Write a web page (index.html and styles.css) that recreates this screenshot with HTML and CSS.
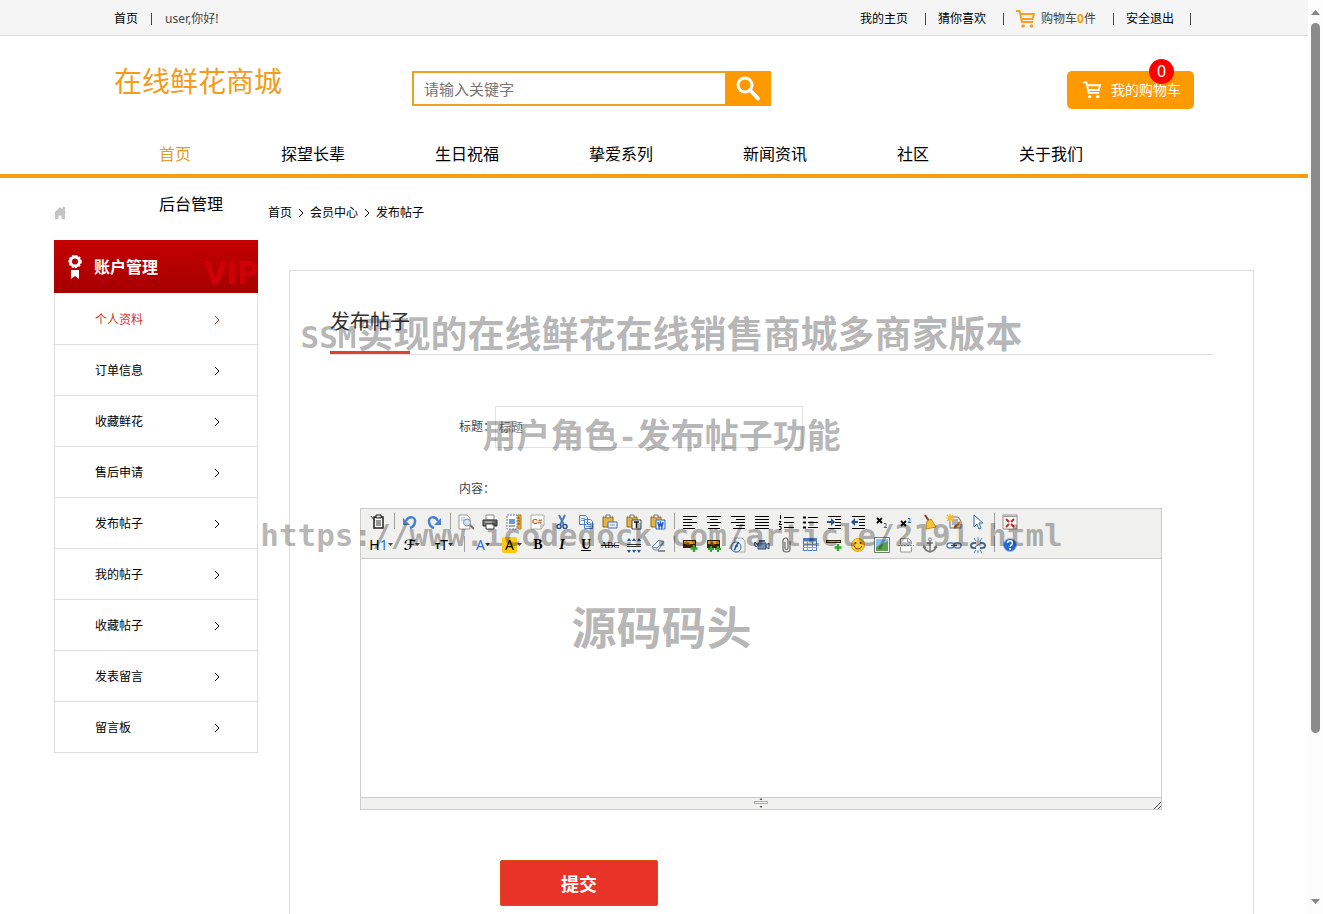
FILE: index.html
```html
<!DOCTYPE html>
<html lang="zh-CN">
<head>
<meta charset="utf-8">
<title>发布帖子</title>
<link rel="stylesheet" href="styles.css">
</head>
<body>
<svg class="defs" aria-hidden="true">
  <symbol id="cart" viewBox="0 0 20 20"><path d="M0 2h3.500l2.500 11h11M4.500 5H18l-1.500 5H6" fill="none" stroke="currentColor" stroke-width="2"/><circle cx="7" cy="17" r="1.800" fill="currentColor"/><circle cx="15.500" cy="17" r="1.800" fill="currentColor"/></symbol>
  <symbol id="arrow" viewBox="0 0 8 10"><path d="M2 1l4 4-4 4" fill="none" stroke="currentColor" stroke-width="1"/></symbol>
  <symbol id="drop" viewBox="0 0 5 3"><path d="M0 0h5L2.500 3z" fill="#444"/></symbol>
  <symbol id="clip" viewBox="0 0 16 16"><path d="M1 3h10v10H1z" fill="#e3b548" stroke="#8c6a1c"/><path d="M4 1h4v3H4z" fill="#eee" stroke="#777"/></symbol>
  <symbol id="picture" viewBox="0 0 16 16"><path d="M1 3h13v8H1z" fill="#3a2208"/><path d="M2 4h11v3H2z" fill="#f0a21c"/><path d="M3 8l3-3 3 3z" fill="#7a4a12"/></symbol>
</svg>

<div class="page">
  <div class="topbar">
    <div class="wrap topbar-row">
      <a href="#">首页</a><span class="bar"></span><span class="muted">user,你好!</span>
      <div class="topbar-links">
        <a href="#">我的主页</a><span class="bar"></span>
        <a href="#">猜你喜欢</a><span class="bar"></span>
        <a href="#" class="mini-cart muted"><svg class="cart-icon"><use href="#cart"/></svg><span>购物车<b>0</b>件</span></a><span class="bar"></span>
        <a href="#">安全退出</a><span class="bar last"></span>
      </div>
    </div>
  </div>

  <header class="wrap header">
    <div class="logo">在线鲜花商城</div>
    <form class="search">
      <input type="text" placeholder="请输入关键字" aria-label="请输入关键字">
      <button type="button" aria-label="搜索"><svg viewBox="0 0 26 26"><circle cx="10" cy="9" r="7" fill="none" stroke="#fff" stroke-width="3"/><path d="M15 14l8 8.500" stroke="#fff" stroke-width="4" stroke-linecap="round"/></svg></button>
    </form>
    <a href="#" class="cart-button"><svg class="cart-icon"><use href="#cart"/></svg>我的购物车<span class="badge">0</span></a>
  </header>

  <nav class="nav">
    <ul class="wrap">
      <li><a href="#" class="active">首页</a></li><li><a href="#">探望长辈</a></li><li><a href="#">生日祝福</a></li><li><a href="#">挚爱系列</a></li><li><a href="#">新闻资讯</a></li><li><a href="#">社区</a></li><li><a href="#">关于我们</a></li><li><a href="#">后台管理</a></li>
    </ul>
  </nav>

  <div class="content">
    <div class="crumbs">
      <svg class="home" viewBox="0 0 12 12"><path d="M6 0l2.500 2.300V0H11v4.500L12 6h-1v6H7.500V8.500h-3V12H1V6H0z" fill="#c4c4c4"/></svg>
      <a href="#">首页</a><svg class="chev"><use href="#arrow"/></svg><a href="#">会员中心</a><svg class="chev"><use href="#arrow"/></svg><a href="#">发布帖子</a>
    </div>

    <div class="columns">
      <aside class="sidebar">
        <h2><svg class="medal" viewBox="0 0 14 24"><path d="M3 15h8v9l-4-3-4 3z" fill="#fff"/><circle cx="7" cy="6.500" r="4.500" fill="none" stroke="#fff" stroke-width="3"/><circle cx="7" cy="6.500" r="6" fill="none" stroke="#fff" stroke-width="1.500" stroke-dasharray="2 1.500"/></svg>账户管理<span class="vip">VIP</span></h2>
        <ul>
          <li><a href="#" class="current">个人资料<svg class="chev"><use href="#arrow"/></svg></a></li>
          <li><a href="#">订单信息<svg class="chev"><use href="#arrow"/></svg></a></li>
          <li><a href="#">收藏鲜花<svg class="chev"><use href="#arrow"/></svg></a></li>
          <li><a href="#">售后申请<svg class="chev"><use href="#arrow"/></svg></a></li>
          <li><a href="#">发布帖子<svg class="chev"><use href="#arrow"/></svg></a></li>
          <li><a href="#">我的帖子<svg class="chev"><use href="#arrow"/></svg></a></li>
          <li><a href="#">收藏帖子<svg class="chev"><use href="#arrow"/></svg></a></li>
          <li><a href="#">发表留言<svg class="chev"><use href="#arrow"/></svg></a></li>
          <li><a href="#">留言板<svg class="chev"><use href="#arrow"/></svg></a></li>
        </ul>
      </aside>

      <main class="panel">
        <div class="panel-title"><h1>发布帖子</h1></div>
        <form class="post">
          <div class="field"><label for="title">标题：</label><input id="title" type="text" placeholder="标题"></div>
          <label class="body-label" for="body">内容：</label>
          <div class="editor">
            <div class="toolbar">
              <div class="tools">
                <button type="button" aria-label="HTML代码"><svg viewBox="0 0 16 16"><path d="M4 3h9v11H4z" fill="#fff" stroke="#222" stroke-width="1.500"/><path d="M6 1h5v3H6z" fill="#ddd" stroke="#222"/><path d="M1 2l4 5M6 7h5M6 9h5M6 11h5" stroke="#333"/></svg></button><i></i>
                <button type="button" aria-label="后退"><svg viewBox="0 0 16 16"><path d="M4 7c3-6 10-4 9 1-.5 3-2 5-5 6" fill="none" stroke="#4a80cf" stroke-width="2.500"/><path d="M1 4v7h7z" fill="#4a80cf"/></svg></button>
                <button type="button" aria-label="前进"><svg viewBox="0 0 16 16"><path d="M12 7C9 1 2 3 3 8c.5 3 2 5 5 6" fill="none" stroke="#4a80cf" stroke-width="2.500"/><path d="M15 4v7H8z" fill="#4a80cf"/></svg></button><i></i>
                <button type="button" aria-label="预览"><svg viewBox="0 0 16 16"><path d="M1 1h8l3 3v11H1z" fill="#fff" stroke="#999"/><path d="M3 4h4M3 6h3" stroke="#9bb5d5"/><circle cx="9" cy="8.500" r="3.500" fill="#cfe3f5" stroke="#7b8fa6"/><path d="M12 11l4 4" stroke="#8a6b55" stroke-width="2"/></svg></button>
                <button type="button" aria-label="打印"><svg viewBox="0 0 16 16"><path d="M4 1h8v5H4z" fill="#fff" stroke="#888"/><path d="M1 6h14v6H1z" fill="#777" stroke="#333"/><path d="M4 10h8v5H4z" fill="#fff" stroke="#444"/><path d="M3 8h10" stroke="#ccc"/></svg></button>
                <button type="button" aria-label="模板"><svg viewBox="0 0 16 16"><path d="M1 1h10v14H1z" fill="#fff" stroke="#5b82b5" stroke-dasharray="2 1"/><path d="M3 5h6v5H3z" fill="#6c9bd2"/><path d="M3 12h6" stroke="#555"/><path d="M12 1h3v14h-3z" fill="#f2b134" stroke="#b97a17"/><path d="M12 4h2M12 7h2M12 10h2" stroke="#75490a"/></svg></button>
                <button type="button" aria-label="插入程序代码"><svg viewBox="0 0 16 16"><path d="M1 1h13v10l-3 4H1z" fill="#fff" stroke="#aaa"/><path d="M11 15v-4h3" fill="none" stroke="#aaa"/><text x="2" y="10" class="tiny brown">C#</text></svg></button>
                <button type="button" aria-label="剪切"><svg viewBox="0 0 16 16"><path d="M5 1l5 10M11 1L6 11" stroke="#507bb0" stroke-width="2"/><circle cx="5" cy="12.500" r="2" fill="none" stroke="#234f92" stroke-width="1.500"/><circle cx="11" cy="12.500" r="2" fill="none" stroke="#234f92" stroke-width="1.500"/></svg></button>
                <button type="button" aria-label="复制"><svg viewBox="0 0 16 16"><path d="M1.500 1.500h6l2 2v7h-8zM6.500 5.500h6l2 2v7h-8z" fill="#e9f2fd" stroke="#4d7fc4"/><path d="M3 4.500h4M3 6.500h3M8 8.500h4M8 10.500h5M8 12.500h5" stroke="#6c9bd2"/></svg></button>
                <button type="button" aria-label="粘贴"><svg viewBox="0 0 16 16"><use href="#clip"/><path d="M6 8h9v6H6z" fill="#e9f2fd" stroke="#4d70a0"/><path d="M8 11h5" stroke="#6c9bd2"/></svg></button>
                <button type="button" aria-label="粘贴为无格式文本"><svg viewBox="0 0 16 16"><use href="#clip"/><path d="M6 6h9v9H6z" fill="#fff" stroke="#444"/><path d="M8 8h5M10.500 8v6" stroke="#111" stroke-width="1.500"/></svg></button>
                <button type="button" aria-label="从Word粘贴"><svg viewBox="0 0 16 16"><use href="#clip"/><path d="M6 6h9v9H6z" fill="#e2edfd" stroke="#3368b8"/><path d="M8 8l1.200 5L10.500 9l1.300 4L13 8" fill="none" stroke="#2459b5" stroke-width="1.500"/></svg></button><i></i>
                <button type="button" aria-label="左对齐"><svg viewBox="0 0 16 16"><path d="M1 2.500h14M1 5.500h9M1 8.500h14M1 11.500h9M1 14.500h12" stroke="#000"/></svg></button>
                <button type="button" aria-label="居中"><svg viewBox="0 0 16 16"><path d="M1 2.500h14M4 5.500h8M1 8.500h14M4 11.500h8M2 14.500h12" stroke="#000"/></svg></button>
                <button type="button" aria-label="右对齐"><svg viewBox="0 0 16 16"><path d="M1 2.500h14M6 5.500h9M1 8.500h14M6 11.500h9M3 14.500h12" stroke="#000"/></svg></button>
                <button type="button" aria-label="两端对齐"><svg viewBox="0 0 16 16"><path d="M1 2.500h14M1 5.500h14M1 8.500h14M1 11.500h14M1 14.500h14" stroke="#000"/></svg></button>
                <button type="button" aria-label="编号"><svg viewBox="0 0 16 16"><path d="M6 3.500h10M6 8.500h10M6 13.500h10M2.500 1v4M1 7.500h2l-2 3h3M1 12.500h2v3H1" fill="none" stroke="#000"/></svg></button>
                <button type="button" aria-label="项目符号"><svg viewBox="0 0 16 16"><path d="M6 3.500h10M6 8.500h10M6 13.500h10" stroke="#000"/><path d="M1 3.500h3M1 8.500h3M1 13.500h3" stroke="#000" stroke-width="2"/></svg></button>
                <button type="button" aria-label="增加缩进"><svg viewBox="0 0 16 16"><path d="M2 2.500h13M9 5.500h6M9 8.500h6M9 11.500h6M2 14.500h13" stroke="#000"/><path d="M1 7h4V4l4 4-4 4V9H1z" fill="#27518f"/></svg></button>
                <button type="button" aria-label="减少缩进"><svg viewBox="0 0 16 16"><path d="M2 2.500h13M9 5.500h6M9 8.500h6M9 11.500h6M2 14.500h13" stroke="#000"/><path d="M8 7H5V4L1 8l4 4V9h3z" fill="#27518f"/></svg></button>
                <button type="button" aria-label="下标"><svg viewBox="0 0 16 16"><path d="M3 4l5 5M8 4L3 9" stroke="#000" stroke-width="1.800"/><path d="M10 9.500h2v2l-2 2h3" fill="none" stroke="#2f62b0"/></svg></button>
                <button type="button" aria-label="上标"><svg viewBox="0 0 16 16"><path d="M3 7l5 5M8 7l-5 5" stroke="#000" stroke-width="1.800"/><path d="M10 4.500h2v2l-2 2h3" fill="none" stroke="#2f62b0"/></svg></button>
                <button type="button" aria-label="清理HTML代码"><svg viewBox="0 0 16 16"><path d="M3 1l4 6" stroke="#8b3d1f" stroke-width="2"/><path d="M5 7l4-2 5 8-10 2z" fill="#f5c33b" stroke="#c48a18"/></svg></button>
                <button type="button" aria-label="一键排版"><svg viewBox="0 0 16 16"><path d="M4 3h8l3 4v7H4z" fill="#f6e9d2" stroke="#777"/><path d="M6 6h6M6 8h6M6 10h5" stroke="#577cab"/><path d="M4 0v8M0 4h8M1 1l6 6M7 1L1 7" stroke="#f6b91f" stroke-width="1.200"/><path d="M8 14l6-6" stroke="#bd652a" stroke-width="2"/></svg></button>
                <button type="button" aria-label="全选"><svg viewBox="0 0 16 16"><path d="M4 1v12l3-3 2 5 2-1-2-5h4z" fill="#fff" stroke="#35689f"/></svg></button><i></i>
                <button type="button" aria-label="全屏显示"><svg viewBox="0 0 16 16"><path d="M1 1h14v14H1z" fill="#fafafa" stroke="#9a8c8c"/><path d="M1 2.500h14" stroke="#999"/><path d="M4 5l3 3M12 5L9 8M4 13l3-3M12 13l-3-3" stroke="#c22c22" stroke-width="2"/></svg></button>
              </div>
              <div class="tools">
                <button type="button" class="pick heading" aria-label="段落">H<em>1</em><svg class="drop"><use href="#drop"/></svg></button>
                <button type="button" class="pick face" aria-label="字体">ℱ<svg class="drop"><use href="#drop"/></svg></button>
                <button type="button" class="pick size" aria-label="文字大小"><small>т</small>T<svg class="drop"><use href="#drop"/></svg></button><i></i>
                <button type="button" class="pick color" aria-label="文字颜色">A<svg class="drop"><use href="#drop"/></svg></button>
                <button type="button" class="pick mark" aria-label="文字背景"><span>A</span><svg class="drop"><use href="#drop"/></svg></button>
                <button type="button" class="serif bold" aria-label="粗体">B</button>
                <button type="button" class="serif bold italic" aria-label="斜体">I</button>
                <button type="button" class="serif bold under" aria-label="下划线">U</button>
                <button type="button" class="serif strike" aria-label="删除线">ABC</button>
                <button type="button" aria-label="行距"><svg viewBox="0 0 16 16"><path d="M1 7.500h14M1 9.500h14" stroke="#333"/><path d="M3 1l-2 3h4zM8 1L6 4h4zM13 1l-2 3h4zM3 16l-2-3h4zM8 16l-2-3h4zM13 16l-2-3h4z" fill="#27518f"/></svg></button>
                <button type="button" aria-label="删除格式"><svg viewBox="0 0 16 16"><path d="M2 10l7-7 5 2-6 8H4z" fill="#edf2fa" stroke="#7086a8"/><path d="M2 10l5 1 7-6" fill="none" stroke="#7086a8"/><path d="M8 14h7" stroke="#333"/></svg></button><i></i>
                <button type="button" aria-label="图片"><svg viewBox="0 0 16 16"><use href="#picture"/><path d="M12 8v7M8.500 11.500h7" stroke="#36a52c" stroke-width="2.500"/></svg></button>
                <button type="button" aria-label="批量图片上传"><svg viewBox="0 0 16 16"><use href="#picture"/><path d="M5 9v6M2 12h6M12 9v6M9 12h6" stroke="#36a52c" stroke-width="2"/></svg></button>
                <button type="button" aria-label="Flash"><svg viewBox="0 0 16 16"><path d="M5 1h7l3 3v11H5z" fill="#eee" stroke="#aaa"/><circle cx="6" cy="10" r="5" fill="#e2edf7" stroke="#486a91"/><path d="M9 6c-3 0-3 6-5 7M5 9h3" fill="none" stroke="#24548d" stroke-width="1.500"/></svg></button>
                <button type="button" aria-label="视音频"><svg viewBox="0 0 16 16"><path d="M4 6h8v6H4z" fill="#7590b2" stroke="#334b6c"/><path d="M12 8l3-2v6l-3-2zM1 5l3 3-2 2-2-3z" fill="#afc4dc" stroke="#334b6c"/><path d="M5 4h6" stroke="#49617f" stroke-width="2"/></svg></button>
                <button type="button" aria-label="插入文件"><svg viewBox="0 0 16 16"><path d="M12 4v8c0 4-7 4-7 0V4c0-4 5-4 5 0v7c0 2-3 2-3 0V5" fill="none" stroke="#666" stroke-width="1.200"/></svg></button>
                <button type="button" aria-label="表格"><svg viewBox="0 0 16 16"><path d="M1.500 1.500h13v12h-13z" fill="#fff" stroke="#4a78bb"/><path d="M1 3h14" stroke="#4a78bb" stroke-width="3"/><path d="M1 7.500h14M1 10.500h14M5.500 4v10M10.500 4v10" stroke="#8ba9d4"/></svg></button>
                <button type="button" aria-label="插入横线"><svg viewBox="0 0 16 16"><path d="M0 3h15v3H0z" fill="#2a1c09"/><path d="M1 4.500h13" stroke="#f0a21c"/><path d="M12 7v7M8.500 10.500h7" stroke="#36a52c" stroke-width="2.500"/></svg></button>
                <button type="button" aria-label="插入表情"><svg viewBox="0 0 16 16"><circle cx="8" cy="8" r="6.500" fill="#ffce32" stroke="#e8a21b"/><path d="M4 9c2 4 6 4 8 0" fill="none" stroke="#66380a"/><circle cx="5.500" cy="6" r="1" fill="#66380a"/><circle cx="10.500" cy="6" r="1" fill="#66380a"/></svg></button>
                <button type="button" aria-label="地图"><svg viewBox="0 0 16 16"><path d="M.5.500h15v15H.5z" fill="#fff" stroke="#777"/><path d="M2 2h12v12H2z" fill="#86c1ed"/><path d="M2 10l6-3 6-3v10H2z" fill="#5ba34a"/></svg></button>
                <button type="button" aria-label="分页"><svg viewBox="0 0 16 16"><path d="M2.500 7V1.500h8l3 3V7M2.500 10v5h11v-5" fill="#fff" stroke="#999"/><path d="M0 8.500h16" stroke="#999" stroke-dasharray="2 1"/><path d="M9.500 1v4h4" fill="none" stroke="#999"/></svg></button>
                <button type="button" aria-label="锚点"><svg viewBox="0 0 16 16"><circle cx="8" cy="2.500" r="1.500" fill="none" stroke="#777"/><path d="M8 4v11M5 6h6M2 9c0 4 3 5 6 6 3-1 6-2 6-6M1 11l1-2 2 2M12 11l2-2 1 2" fill="none" stroke="#777" stroke-width="1.400"/></svg></button>
                <button type="button" aria-label="超级链接"><svg viewBox="0 0 16 16"><rect x="1" y="6" width="7" height="5" rx="2.500" fill="#fff" stroke="#5c7fac" stroke-width="1.500"/><rect x="8" y="6" width="7" height="5" rx="2.500" fill="#fff" stroke="#5c7fac" stroke-width="1.500"/><path d="M5 8.500h6" stroke="#304f7a" stroke-width="1.500"/></svg></button>
                <button type="button" aria-label="取消超级链接"><svg viewBox="0 0 16 16"><path d="M6 6H4c-4 0-4 5 0 5h2M10 6h2c4 0 4 5 0 5h-2" fill="none" stroke="#48698f" stroke-width="2"/><path d="M8 0v4M8 13v3M4 1l2 3M12 1l-2 3M4 16l2-3M12 16l-2-3M5 10l6-4" stroke="#5a8cbd"/></svg></button><i></i>
                <button type="button" aria-label="关于"><svg viewBox="0 0 16 16"><circle cx="8" cy="8" r="6.500" fill="#2767cf" stroke="#9bb8dd"/><path d="M5.500 6c0-3 5-3 5 0 0 2-2.500 2-2.500 4M8 11v2" fill="none" stroke="#fff" stroke-width="1.500"/></svg></button>
              </div>
            </div>
            <textarea id="body"></textarea>
            <div class="statusbar">
              <svg class="grip" viewBox="0 0 14 10"><path d="M5.500 2h3L7 0zM5.500 8h3L7 10z" fill="#555"/><path d="M.5 3.500h13v2H.5z" fill="#fff" stroke="#aaa"/></svg>
              <svg class="corner" viewBox="0 0 8 8"><path d="M1 8l7-7M5 8l3-3" stroke="#444"/></svg>
            </div>
          </div>
          <button type="button" class="submit">提交</button>
        </form>
      </main>
    </div>
  </div>
</div>

<div class="scrollbar" aria-hidden="true">
  <svg viewBox="0 0 9 5"><path d="M0 5h9L4.500 0z" fill="#858585"/></svg>
  <div class="track"><div class="thumb"></div></div>
  <svg viewBox="0 0 9 5"><path d="M0 0h9L4.500 5z" fill="#858585"/></svg>
</div>

<div class="stamp stamp-a"><span>SSM</span>实现的在线鲜花在线销售商城多商家版本</div>
<div class="stamp stamp-b">用户角色<span>-</span>发布帖子功能</div>
<div class="stamp stamp-c">https://www.icodedock.com/article/2191.html</div>
<div class="stamp stamp-d">源码码头</div>
</body>
</html>
```

FILE: styles.css
```css
* { box-sizing: border-box; }
body {
  position: relative;
  display: flex;
  height: 100vh;
  margin: 0;
  overflow: hidden;
  background: #fff;
  color: #000;
  font: 12px/20px "Noto Sans", "Noto Sans CJK SC", sans-serif;
}
a { color: inherit; text-decoration: none; }
ul { margin: 0; padding: 0; list-style: none; }
h1, h2 { margin: 0; }
input, button, textarea { font-family: inherit; margin: 0; }
button { cursor: pointer; }
.defs { position: absolute; width: 0; height: 0; }
.page { flex: 1; min-width: 0; }
.wrap { max-width: 1080px; margin: 0 auto; }

.topbar { background: #f5f5f5; border-bottom: 1px solid #ddd; }
.topbar-row { display: flex; align-items: center; height: 35px; padding-top: 2px; }
.topbar-links { display: flex; align-items: center; margin-left: auto; padding-right: 3px; }
.muted { color: #444; }
.bar { width: 1px; height: 12px; margin: 0 13px; background: #444; }
.topbar-links .bar { margin: 0 12px 0 17px; }
.topbar-links .bar.last { margin: 0 0 0 16px; }
.mini-cart { display: flex; align-items: center; gap: 5px; }
.mini-cart b { color: #f90; }
.cart-icon { width: 20px; height: 20px; }
.mini-cart .cart-icon { color: #f6a023; }

.header { display: grid; grid-template-columns: 298px 359px 1fr; align-items: start; height: 93px; padding-top: 25px; }
.logo { color: #f39c1c; font-size: 28px; line-height: 40px; }
.search { display: flex; height: 35px; margin-top: 10px; }
.search input { flex: 1; min-width: 0; padding: 0 10px; border: 2px solid #f0a020; border-right: 0; font-size: 15px; outline: 0; }
.search input::placeholder, .field input::placeholder { color: #757575; opacity: 1; }
.search button { width: 46px; padding: 4px 10px; border: 0; background: #f90; }
.search svg { display: block; width: 26px; height: 26px; }
.cart-button { position: relative; display: flex; align-items: center; justify-self: end; gap: 9px; width: 127px; height: 38px; margin-top: 10px; padding-left: 16px; border-radius: 5px; background: #f90; color: #fff; font-size: 14px; white-space: nowrap; }
.cart-button .cart-icon { width: 19px; }
.badge { position: absolute; top: -12px; right: 20px; width: 25px; height: 25px; border-radius: 50%; background: #f00; font-size: 16px; line-height: 25px; text-align: center; }

.nav { height: 49px; border-bottom: 4px solid #f99c0d; }
.nav ul { display: flex; flex-wrap: wrap; }
.nav a { position: relative; display: block; padding: 0 45px; font-size: 16px; line-height: 50px; }
.nav .active { color: #e89a2a; }

.content { max-width: 1200px; margin: 0 auto; }
.crumbs { display: flex; align-items: center; padding: 25px 0 17px; }
.home { width: 12px; height: 12px; margin-right: 202px; }
.chev { width: 8px; height: 10px; }
.crumbs .chev { margin: 0 5px; }
.columns { display: flex; align-items: flex-start; gap: 31px; }

.sidebar { width: 204px; }
.sidebar h2 { display: flex; align-items: center; gap: 12px; height: 53px; padding-left: 14px; overflow: hidden; background: linear-gradient(#c40000, #a60000); color: #fff; font-size: 16px; }
.medal { width: 14px; height: 24px; }
.vip { margin: 13px 0 0 auto; color: #cf0008; font: bold 32px/40px "Liberation Sans Narrow", "DejaVu Sans Condensed", sans-serif; }
.sidebar ul { border: 1px solid #ddd; border-top: 0; }
.sidebar li + li { border-top: 1px solid #ddd; }
.sidebar li a { display: flex; align-items: center; justify-content: space-between; height: 50px; padding: 2px 36px 0 40px; }
.sidebar li:first-child a { height: 51px; }
.sidebar .current { color: #d1352c; }

.panel { flex: 1; min-width: 0; margin-top: 30px; padding: 30px 40px 60px; border: 1px solid #ddd; }
.panel-title { display: flex; border-bottom: 1px solid #ddd; }
.panel-title h1 { padding-bottom: 8px; border-bottom: 3px solid #dd4330; color: #333; font-size: 20px; font-weight: 400; line-height: 42px; }
.post { display: flex; flex-direction: column; align-items: flex-start; padding: 51px 0 0 30px; }
.post label { color: #444; }
.field { display: flex; align-items: center; padding-left: 99px; }
.field input { width: 308px; height: 42px; padding: 0 3px; border: 1px solid #e2e2e2; font-size: 12px; outline: 0; }
.body-label { margin: 31px 0 9px 99px; }
.editor { width: 100%; max-width: 802px; border: 1px solid #ccc; }
.toolbar { padding: 1px 4px 2px 5px; border-bottom: 1px solid #ccc; background: #f0f0ee; }
.tools { display: flex; height: 23px; }
.tools i { width: 1px; height: 16px; margin: 3px 3px 0 4px; background: #a0a0a0; }
.tools button { display: flex; align-items: center; justify-content: center; width: 24px; height: 23px; padding: 0; border: 0; background: none; color: #000; font-size: 14px; line-height: 16px; }
.tools svg { width: 16px; height: 16px; }
.tools svg.drop { width: 5px; height: 3px; }
.tools .pick { width: 32px; }
.tools .heading, .tools .color { width: 30px; }
.tools .mark { width: 28px; }
.tools em, .tools .color { color: #2f6fd6; font-style: normal; }
.tools .face { font-family: "DejaVu Sans", sans-serif; font-weight: 700; }
.tools small { font-size: 10px; font-weight: 700; }
.tools .mark span { width: 15px; background: #ffc90e; border-radius: 2px; }
.tools .serif { font-family: "Liberation Serif", serif; }
.tools .bold { font-weight: 700; }
.tools .italic { font-style: italic; }
.tools .under { text-decoration: underline; }
.tools .strike { font-size: 9px; text-decoration: line-through; }
.tiny { font: bold 8px "Liberation Sans", sans-serif; }
.brown { fill: #a5551e; }
.editor textarea { display: block; width: 100%; height: 238px; padding: 5px; border: 0; outline: 0; resize: none; }
.statusbar { position: relative; display: flex; justify-content: center; height: 12px; border-top: 1px solid #ccc; background: #f0f0ee; }
.grip { width: 14px; height: 10px; }
.corner { position: absolute; right: 0; bottom: 0; width: 8px; height: 8px; }
.submit { width: 158px; height: 46px; margin: 50px 0 0 140px; border: 1px solid #dd4a14; border-radius: 2px; background: #e83428; color: #fff; font-size: 18px; font-weight: 700; }

.scrollbar { display: flex; flex-direction: column; align-items: center; width: 15px; padding: 10px 0; background: #fcfcfc; }
.scrollbar svg { width: 9px; height: 5px; }
.track { flex: 1; padding-top: 8px; }
.thumb { width: 9px; height: 81%; border-radius: 5px; background: #8b8b8b; }

.stamp { position: absolute; left: 0; right: 0; color: rgba(0, 0, 0, .3); font-weight: 700; line-height: 50px; text-align: center; white-space: nowrap; pointer-events: none; }
.stamp span, .stamp-c { font-family: "DejaVu Sans Mono", monospace; font-size: 31px; }
.stamp-a { top: 309px; font-size: 37px; }
.stamp-b { top: 410px; font-size: 34px; }
.stamp-c { top: 510px; }
.stamp-d { top: 603px; font-size: 45px; }
```
